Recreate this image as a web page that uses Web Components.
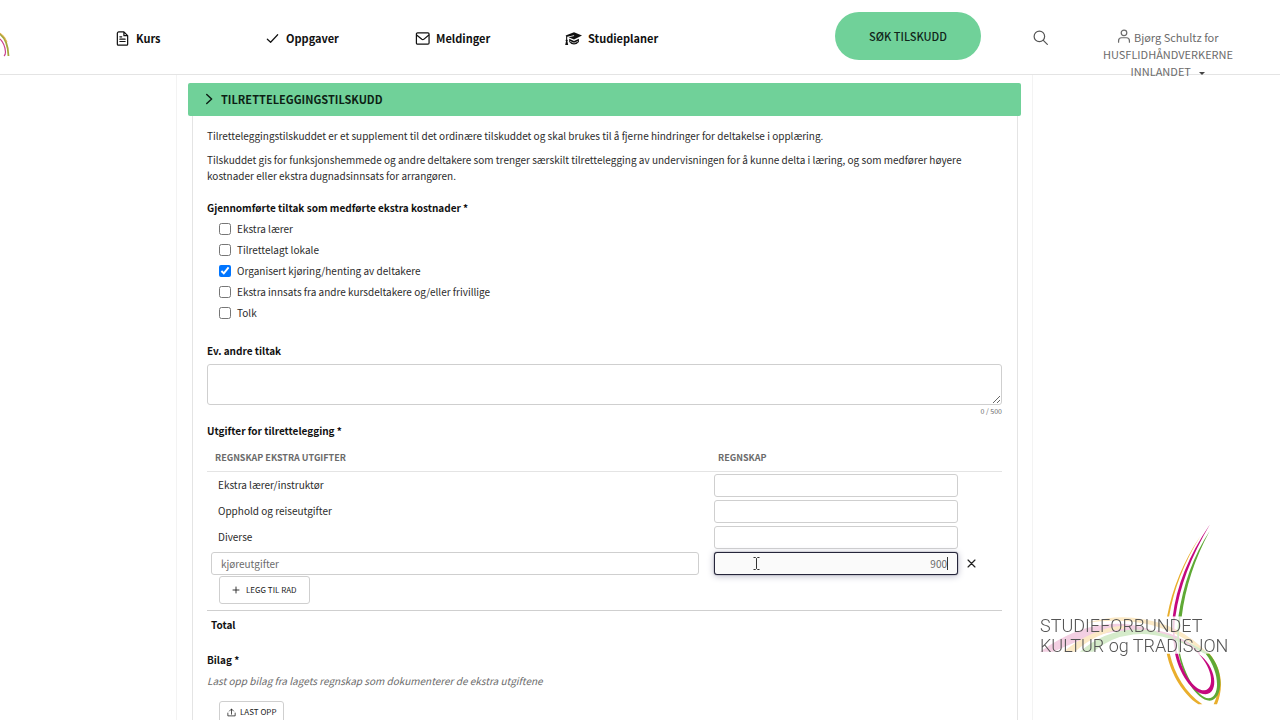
<!DOCTYPE html>
<html lang="nb">
<head>
<meta charset="utf-8">
<meta name="viewport" content="width=device-width, initial-scale=1">
<title>Tilretteleggingstilskudd</title>
<style>
  body {
    --green: #70d199;
    --line: #e4e4e4;
    --field: #cfcfcf;
    --muted: #6b6b6b;
    margin: 0;
    height: 100vh;
    display: flex;
    flex-direction: column;
    overflow: hidden;
    background: #fff;
    color: #2b2b2b;
    font: 10px/16px "Noto Sans CJK JP", "Noto Sans", sans-serif;
  }
</style>
</head>
<body>
<app-header>
  <nav-item icon="file">Kurs</nav-item>
  <nav-item icon="check">Oppgaver</nav-item>
  <nav-item icon="mail">Meldinger</nav-item>
  <nav-item icon="cap">Studieplaner</nav-item>
</app-header>
<page-column>
  <form-section heading="TILRETTELEGGINGSTILSKUDD">
    <section-intro>
      <p>Tilretteleggingstilskuddet er et supplement til det ordinære tilskuddet og skal brukes til å fjerne hindringer for deltakelse i opplæring.</p>
      <p>Tilskuddet gis for funksjonshemmede og andre deltakere som trenger særskilt tilrettelegging av undervisningen for å kunne delta i læring, og som medfører høyere kostnader eller ekstra dugnadsinnsats for arrangøren.</p>
    </section-intro>
    <check-group legend="Gjennomførte tiltak som medførte ekstra kostnader *">
      <check-option>Ekstra lærer</check-option>
      <check-option>Tilrettelagt lokale</check-option>
      <check-option checked>Organisert kjøring/henting av deltakere</check-option>
      <check-option>Ekstra innsats fra andre kursdeltakere og/eller frivillige</check-option>
      <check-option>Tolk</check-option>
    </check-group>
    <text-field label="Ev. andre tiltak" max="500"></text-field>
    <expense-table></expense-table>
    <file-upload></file-upload>
  </form-section>
</page-column>
<brand-logo></brand-logo>

<script>
const icons = {
  file: '<path d="M4 1h5.500L13.500 5v9a1 1 0 0 1-1 1H3.500a1 1 0 0 1-1-1V2.500A1.500 1.500 0 0 1 4 1zM9.500 1v4h4M5.200 6.200h2M5.200 8.700h5.600M5.200 11.200h5.600"/>',
  check: '<path d="M2.500 8.800 6 12 13.500 4"/>',
  mail: '<rect x="1.500" y="2" width="13.500" height="12" rx="1.2"/><path d="m2 4.500 5.300 4.400q1 .7 2 0l5.200-4.400"/>',
  cap: '<path fill="currentColor" stroke="none" d="M9 1.8 17 5 9 9 3.600 6.700l5.600-1.200-.2-.8-6.800 1.500v2.800l.7 1-.5.8.8 3.600H.2L1 10.700l-.5-.9.6-.9V5.800L.6 5z"/><path fill="currentColor" stroke="none" d="M4.200 8.200 9 10.600 13.900 8.200v3.200q-2.200 2.600-4.900 2.600t-4.800-2.600z"/><path stroke="#fff" stroke-width=".6" stroke-linecap="butt" d="M5 11q1.500 0 2 .9 2 1 4 0 .5-.9 2-.9"/>',
  search: '<circle cx="6.8" cy="6.8" r="5.6"/><path d="m11 11 4.3 4.3"/>',
  user: '<circle cx="8" cy="4.4" r="3.2"/><path d="M1.8 15v-1.6q0-3.4 3.4-3.4h5.6q3.4 0 3.4 3.4V15"/>',
  chevron: '<path d="m5 2 6.500 6L5 14"/>',
  plus: '<path d="M8 2v12M2 8h12"/>',
  cross: '<path d="m3 3 10 10M13 3 3 13"/>',
  upload: '<path d="M8 11V2M4.4 5.4 8 1.8l3.6 3.6M1.5 9v5h13V9"/>'
};

const icon = (name, size, weight = 1.3) =>
  `<svg viewBox="0 0 ${name === 'cap' ? 17 : 16} 16" width="${size}" height="${size}" fill="none" stroke="currentColor" stroke-width="${weight}" stroke-linecap="round" stroke-linejoin="round" aria-hidden="true">${icons[name]}</svg>`;

class AppHeader extends HTMLElement {
  constructor() {
    super();
    this.attachShadow({ mode: 'open' });
    this.shadowRoot.innerHTML = `
      <style>
        :host {
          display: flex;
          flex: none;
          height: 74px;
          border-bottom: 1px solid var(--line);
          z-index: 1;
        }
        .logo {
          width: 115px;
        }
        .logo svg {
          display: block;
          margin-top: 30px;
        }
        nav {
          display: flex;
          flex: 1;
          padding-top: 28px;
        }
        .apply {
          width: 146px;
          height: 48px;
          margin-top: 12px;
          border: 0;
          border-radius: 24px;
          background: var(--green);
          color: #10251a;
          font: 500 11px/16px "Noto Sans CJK JP", sans-serif;
        }
        .search {
          width: 24px;
          height: 24px;
          margin: 25px 0 0 47px;
          padding: 0;
          border: 0;
          background: none;
          color: #555;
        }
        .search svg {
          display: block;
          margin: auto;
        }
        .user {
          width: 144px;
          height: 56px;
          margin: 26px 40px 0 44px;
          padding: 0;
          border: 0;
          background: none;
          color: var(--muted);
          font: 11px/17px "Noto Sans CJK JP", sans-serif;
        }
        .user svg {
          vertical-align: -1px;
        }
        .caret {
          display: inline-block;
          margin-left: 6px;
          border: 3px solid transparent;
          border-top-color: #444;
          border-bottom: 0;
          vertical-align: 1px;
        }
      </style>
      <a class="logo" href="#" aria-label="Forside">
        <svg viewBox="0 0 12 28" width="12" height="28" fill="none">
          <path d="M0 4q8 6 8.500 22" stroke="#a6a63c" stroke-width="1.800"/>
          <path d="M0 3q5 3 7 9" stroke="#e3b04a"/>
          <path d="M0 9q5 5 5.500 13 0 3-1.500 4" stroke="#c9418f" stroke-width="1.200"/>
        </svg>
      </a>
      <nav><slot></slot></nav>
      <button class="apply">SØK TILSKUDD</button>
      <button class="search" aria-label="Søk">${icon('search', 15)}</button>
      <button class="user">${icon('user', 14, 1.4)} Bjørg Schultz for HUSFLIDHÅNDVERKERNE INNLANDET <span class="caret"></span></button>
    `;
  }
}

class NavItem extends HTMLElement {
  constructor() {
    super();
    this.attachShadow({ mode: 'open' });
    this.shadowRoot.innerHTML = `
      <style>
        :host {
          display: block;
          width: 150px;
        }
        a {
          display: flex;
          align-items: center;
          gap: 6px;
          color: #111;
          font-size: 11px;
          line-height: 20px;
          font-weight: bold;
          text-decoration: none;
        }
      </style>
      <a href="#">${icon(this.getAttribute('icon'), this.getAttribute('icon') === 'cap' ? 17 : 15)}<slot></slot></a>
    `;
  }
}

class PageColumn extends HTMLElement {
  constructor() {
    super();
    this.attachShadow({ mode: 'open' });
    this.shadowRoot.innerHTML = `
      <style>
        :host {
          display: block;
          flex: 1;
          min-height: 0;
          overflow: hidden;
          margin: 0 247px 0 176px;
          padding: 8px 11px 0;
          border: solid #f3f3f3;
          border-width: 0 1px;
        }
      </style>
      <slot></slot>
    `;
  }
}

class FormSection extends HTMLElement {
  constructor() {
    super();
    this.attachShadow({ mode: 'open' });
    this.shadowRoot.innerHTML = `
      <style>
        :host {
          display: block;
        }
        h2 {
          margin: 0;
        }
        h2 button {
          display: flex;
          align-items: center;
          gap: 6px;
          width: 100%;
          height: 33px;
          padding: 0 15px 2px;
          border: 0;
          border-radius: 2px;
          background: var(--green);
          color: #0d1f15;
          font: bold 11px/16px "Noto Sans CJK JP", sans-serif;
        }
        .body {
          margin: 0 3px 0 4px;
          padding: 12px 15px 40px 14px;
          border: 1px solid var(--line);
          border-top: 0;
        }
      </style>
      <h2><button aria-expanded="true">${icon('chevron', 12, 2)}${this.getAttribute('heading')}</button></h2>
      <div class="body"><slot></slot></div>
    `;
  }
}

class SectionIntro extends HTMLElement {
  constructor() {
    super();
    this.attachShadow({ mode: 'open' });
    this.shadowRoot.innerHTML = `
      <style>
        :host {
          display: block;
          margin-bottom: 16px;
        }
        ::slotted(p) {
          margin: 0 0 8px;
        }
      </style>
      <slot></slot>
    `;
  }
}

class CheckGroup extends HTMLElement {
  constructor() {
    super();
    this.attachShadow({ mode: 'open' });
    this.shadowRoot.innerHTML = `
      <style>
        :host {
          display: block;
          margin-bottom: 20px;
        }
        fieldset {
          margin: 0;
          padding: 0 0 0 12px;
          border: 0;
        }
        legend {
          margin-left: -12px;
          padding: 0 0 2px;
          color: #111;
          font-weight: bold;
        }
      </style>
      <fieldset>
        <legend>${this.getAttribute('legend')}</legend>
        <slot></slot>
      </fieldset>
    `;
  }
}

class CheckOption extends HTMLElement {
  constructor() {
    super();
    this.attachShadow({ mode: 'open' });
    this.shadowRoot.innerHTML = `
      <style>
        :host {
          display: block;
        }
        label {
          display: flex;
          align-items: center;
          gap: 6px;
          height: 21px;
        }
        input {
          width: 12px;
          height: 12px;
          margin: 0;
        }
      </style>
      <label><input type="checkbox"><slot></slot></label>
    `;
    this.shadowRoot.querySelector('input').checked = this.hasAttribute('checked');
  }
}

class TextField extends HTMLElement {
  constructor() {
    super();
    this.attachShadow({ mode: 'open' });
    this.shadowRoot.innerHTML = `
      <style>
        :host {
          display: block;
          margin-bottom: 6px;
        }
        label {
          display: block;
          margin-bottom: 5px;
          color: #111;
          font-weight: bold;
        }
        textarea {
          display: block;
          box-sizing: border-box;
          width: 100%;
          height: 41px;
          padding: 4px 8px;
          border: 1px solid var(--field);
          border-radius: 3px;
          font: inherit;
        }
        .count {
          color: var(--muted);
          font-size: 7px;
          line-height: 12px;
          text-align: right;
        }
      </style>
      <label for="text">${this.getAttribute('label')}</label>
      <textarea id="text" maxlength="${this.getAttribute('max')}"></textarea>
      <div class="count"></div>
    `;
    this._text = this.shadowRoot.querySelector('textarea');
    this._text.addEventListener('input', this._updateCount.bind(this));
    this._updateCount();
  }

  _updateCount() {
    this.shadowRoot.querySelector('.count').textContent = `${this._text.value.length} / ${this.getAttribute('max')}`;
  }
}

class ExpenseTable extends HTMLElement {
  constructor() {
    super();
    const rows = ['Ekstra lærer/instruktør', 'Opphold og reiseutgifter', 'Diverse'];
    this.attachShadow({ mode: 'open' });
    this.shadowRoot.innerHTML = `
      <style>
        :host {
          display: block;
          margin-bottom: 14px;
        }
        h3 {
          margin: 0 0 6px;
          color: #111;
          font: inherit;
          font-weight: bold;
        }
        table {
          width: 100%;
          border-collapse: collapse;
          table-layout: fixed;
        }
        .name {
          width: 62.4%;
        }
        .remove {
          width: 44px;
        }
        th {
          height: 26px;
          padding: 0 8px;
          border-bottom: 1px solid var(--line);
          color: var(--muted);
          font-size: 9px;
          text-align: left;
        }
        th + th {
          padding-left: 15px;
        }
        td {
          height: 26px;
          padding: 0 4px;
        }
        td + td {
          padding: 0 0 0 11px;
        }
        td + td:last-child {
          padding-left: 6px;
        }
        td label {
          padding-left: 7px;
        }
        input {
          display: block;
          box-sizing: border-box;
          width: 100%;
          height: 23px;
          padding: 0 9px;
          border: 1px solid var(--field);
          border-radius: 3px;
          background: #fff;
          color: var(--muted);
          font: inherit;
        }
        .amount {
          text-align: right;
        }
        .active {
          position: relative;
        }
        .active input {
          padding-right: 10px;
          border-color: #25253a;
          background: #fafafa;
          box-shadow: 0 0 1px #25253a, 0 1px 7px #b8b8c8;
        }
        .active i {
          position: absolute;
          top: 5px;
          right: 10px;
          height: 13px;
          border-left: 1px solid #333;
        }
        .active svg {
          position: absolute;
          top: 5px;
          left: 39px;
        }
        button {
          display: flex;
          align-items: center;
          background: none;
          color: #222;
          font: 8px/12px "Noto Sans CJK JP", sans-serif;
        }
        .del {
          padding: 2px;
          border: 0;
        }
        .add {
          gap: 6px;
          height: 28px;
          margin: 0 0 0 8px;
          padding: 0 12px;
          border: 1px solid var(--field);
          border-radius: 3px;
        }
        .adder td {
          height: 34px;
          vertical-align: top;
        }
        tfoot td {
          height: 27px;
          border-top: 1px solid var(--field);
          color: #111;
          font-weight: bold;
        }
      </style>
      <h3 id="title">Utgifter for tilrettelegging *</h3>
      <table aria-labelledby="title">
        <colgroup><col class="name"><col><col class="remove"></colgroup>
        <thead>
          <tr><th>REGNSKAP EKSTRA UTGIFTER</th><th colspan="2">REGNSKAP</th></tr>
        </thead>
        <tbody>
          ${rows.map((name, i) => `
          <tr>
            <td><label for="sum${i}">${name}</label></td>
            <td><input class="amount" id="sum${i}"></td>
            <td></td>
          </tr>`).join('')}
          <tr>
            <td><input aria-label="Utgift" value="kjøreutgifter"></td>
            <td>
              <div class="active">
                <input class="amount" aria-label="Regnskap" value="900"><i></i>
                <svg viewBox="0 0 7 13" width="7" height="13" fill="none" stroke="#333"><path d="M.5.5h2l1 1 1-1h2M3.500 1.500v10M.5 12.500h2l1-1 1 1h2"/></svg>
              </div>
            </td>
            <td><button class="del" aria-label="Fjern rad">${icon('cross', 11, 1.8)}</button></td>
          </tr>
          <tr class="adder"><td colspan="3"><button class="add">${icon('plus', 8, 1.8)}LEGG TIL RAD</button></td></tr>
        </tbody>
        <tfoot>
          <tr><td colspan="3">Total</td></tr>
        </tfoot>
      </table>
    `;
  }
}

class FileUpload extends HTMLElement {
  constructor() {
    super();
    this.attachShadow({ mode: 'open' });
    this.shadowRoot.innerHTML = `
      <style>
        :host {
          display: block;
        }
        h3 {
          margin: 0 0 5px;
          color: #111;
          font: inherit;
          font-weight: bold;
        }
        p {
          margin: 0 0 12px;
          color: var(--muted);
          font-style: italic;
        }
        button {
          display: flex;
          align-items: center;
          gap: 4px;
          height: 22px;
          margin-left: 12px;
          padding: 0 7px;
          border: 1px solid var(--field);
          border-radius: 3px;
          background: none;
          color: #222;
          font: 8px/12px "Noto Sans CJK JP", sans-serif;
        }
      </style>
      <h3>Bilag *</h3>
      <p>Last opp bilag fra lagets regnskap som dokumenterer de ekstra utgiftene</p>
      <button>${icon('upload', 9, 1.4)}LAST OPP</button>
    `;
  }
}

class BrandLogo extends HTMLElement {
  constructor() {
    super();
    this.attachShadow({ mode: 'open' });
    this.shadowRoot.innerHTML = `
      <style>
        /* Floats over the page in the corner */
        :host {
          position: fixed;
          right: 57px;
          bottom: 14px;
          width: 183px;
          height: 183px;
        }
        svg {
          position: absolute;
          inset: 0;
        }
        div {
          position: absolute;
          top: 93px;
          left: 0;
          color: #555;
          font: 18px/20px Roboto, sans-serif;
          font-weight: 300;
          white-space: nowrap;
        }
      </style>
      <svg viewBox="30 25 550 550" width="183" height="183" fill="none" aria-hidden="true">
        <path fill="#f3cfe2" d="M30 412Q150 325 270 328 360 332 440 385L435 375Q350 345 270 350 190 355 70 412z"/>
        <path fill="#fbe9c6" d="M100 412Q190 340 280 334L290 341Q200 352 135 412zM170 325Q260 298 340 314 450 330 530 412L518 412Q440 345 340 326 260 312 170 325z"/>
        <path fill="#d5ebca" d="M150 412Q220 350 310 345 400 342 470 380L540 418 525 418Q400 350 310 360 240 368 190 412z"/>
        <path stroke="#f3cfe2" stroke-width="5" d="M433 308Q428 365 440 418M380 350Q460 365 510 418"/>
        <path stroke="#d5ebca" stroke-width="5" d="M450 308Q440 365 450 418"/>
        <path fill="#e9ae2c" d="M512 64Q435 180 412 306L418 306Q438 185 512 64z"/>
        <path fill="#c5087e" d="M541 29Q445 170 429 306L437 306Q455 175 541 29z"/>
        <path fill="#5fa935" d="M540 49Q467 160 446 306L456 306Q472 175 540 49z"/>
        <path fill="#e9ae2c" d="M411 418C424 480 460 540 506 570L518 570C468 535 434 480 420 418zM530 418C572 465 574 525 552 570L562 570C582 520 578 465 540 418z"/>
        <path fill="#5fa935" d="M447 418C458 485 500 558 540 559 582 556 584 465 538 418L528 418C572 475 572 550 536 552 504 550 464 480 451 418z"/>
        <path fill="#c5087e" d="M436 418C446 470 486 540 528 540 570 536 560 455 506 418 550 462 556 524 524 528 490 528 456 470 445 418z"/>
      </svg>
      <div>STUDIEFORBUNDET<br>KULTUR og TRADISJON</div>
    `;
  }
}

customElements.define('app-header', AppHeader);
customElements.define('nav-item', NavItem);
customElements.define('page-column', PageColumn);
customElements.define('form-section', FormSection);
customElements.define('section-intro', SectionIntro);
customElements.define('check-group', CheckGroup);
customElements.define('check-option', CheckOption);
customElements.define('text-field', TextField);
customElements.define('expense-table', ExpenseTable);
customElements.define('file-upload', FileUpload);
customElements.define('brand-logo', BrandLogo);
</script>
</body>
</html>
